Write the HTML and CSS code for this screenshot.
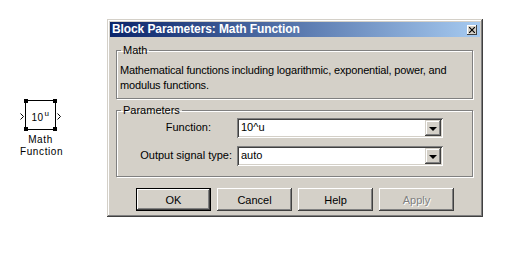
FILE: index.html
```html
<!DOCTYPE html>
<html>
<head>
    <meta charset="UTF-8">
    <title>Block Parameters: Math Function</title>
    <link rel="stylesheet" href="styles.css">
</head>
<body>

<div class="canvas">

    <div class="model">
        <div class="blk-row">
            <svg class="port" width="4" height="7" viewBox="0 0 4 7"><polyline points="0.5,0.5 3.5,3.5 0.5,6.5" fill="none" stroke="#000" stroke-width="1"/></svg>
            <div class="blk">
                <span class="blk-text">10<sup>u</sup></span>
                <i class="hd tl"></i><i class="hd tr"></i><i class="hd bl"></i><i class="hd br"></i>
            </div>
            <svg class="port" width="4" height="7" viewBox="0 0 4 7"><polyline points="0.5,0.5 3.5,3.5 0.5,6.5" fill="none" stroke="#000" stroke-width="1"/></svg>
        </div>
        <div class="blk-name">Math<br>Function</div>
    </div>

    <div class="dlg">
        <div class="title">
            <span>Block Parameters: Math Function</span>
            <span class="close"><svg width="6" height="6" viewBox="0 0 6 6"><path d="M0 0L6 6M6 0L0 6" stroke="#000" stroke-width="1.2"/></svg></span>
        </div>

        <fieldset class="group math">
            <legend>Math</legend>
            <p>Mathematical functions including logarithmic, exponential, power, and modulus functions.</p>
        </fieldset>

        <fieldset class="group params">
            <legend>Parameters</legend>
            <div class="form">
                <label class="lbl-fn">Function:</label>
                <div class="combo"><span>10^u</span><i class="drop"></i></div>
                <label>Output signal type:</label>
                <div class="combo"><span>auto</span><i class="drop"></i></div>
            </div>
        </fieldset>

        <div class="buttons">
            <button class="btn default">OK</button>
            <button class="btn">Cancel</button>
            <button class="btn">Help</button>
            <button class="btn disabled">Apply</button>
        </div>
    </div>

</div>

</body>
</html>
```

FILE: styles.css
```css
* {
    margin: 0;
    padding: 0;
    box-sizing: border-box;
}

body {
    background: #fff;
    font: 11px/1.2 "Liberation Sans", Arial, sans-serif;
    color: #000;
}

.canvas {
    display: flex;
    align-items: flex-start;
    width: 514px;
    height: 263px;
}

/* simulink block */

.model {
    width: 107px;
    padding: 100px 0 0 20px;
}

.blk-row {
    display: flex;
    align-items: center;
    gap: 1px;
    width: 41px;
}

.port {
    display: block;
    margin-top: 3px;
}

.blk {
    position: relative;
    width: 31px;
    height: 30px;
    border: 1px solid #000;
    display: flex;
    align-items: center;
    justify-content: center;
}

.blk-text {
    font-size: 10px;
    letter-spacing: 0.5px;
    padding-top: 3px;
}

.blk-text sup {
    font-size: 8px;
    margin-left: 1px;
    vertical-align: 5px;
}

.hd {
    position: absolute;
    width: 4px;
    height: 4px;
    background: #000;
}

.tl { left: -2px; top: -2px; }
.tr { right: -2px; top: -2px; }
.bl { left: -2px; bottom: -2px; }
.br { right: -2px; bottom: -2px; }

.blk-name {
    width: 41px;
    margin-top: 4px;
    text-align: center;
    font-size: 10px;
    line-height: 12px;
    letter-spacing: 0.6px;
}

/* dialog */

.dlg {
    margin-top: 19px;
    width: 376px;
    height: 198px;
    padding: 3px;
    background: #d4d0c8;
    box-shadow: inset -1px -1px #404040, inset 1px 1px #d4d0c8, inset -2px -2px #808080, inset 2px 2px #fff;
    display: flex;
    flex-direction: column;
}

.title {
    height: 15px;
    padding: 0 3px 0 2px;
    background: linear-gradient(to right, #0a246a, #a6caf0);
    color: #fff;
    font-weight: bold;
    font-size: 12px;
    letter-spacing: -0.1px;
    display: flex;
    align-items: center;
    justify-content: space-between;
}

.close {
    width: 10px;
    height: 10px;
    background: #d4d0c8;
    box-shadow: inset -1px -1px #404040, inset 1px 1px #fff;
    display: flex;
    align-items: center;
    justify-content: center;
}

.close svg {
    display: block;
}

.group {
    margin: 0 7px 0 6px;
    border: 1px solid #808080;
    box-shadow: inset 1px 1px #fff, 1px 1px #fff;
}

.group legend {
    margin-left: 1px;
    padding: 0 2px;
    line-height: 14px;
}

.math {
    margin-top: 6px;
    padding: 6px 10px 5px 3px;
}

.math p {
    line-height: 15px;
    letter-spacing: -0.16px;
}

.params {
    margin-top: 4px;
    padding: 1px 29px 10px 3px;
}

.form {
    display: grid;
    grid-template-columns: 1fr 206px;
    column-gap: 5px;
    row-gap: 8px;
    align-items: center;
}

.form label {
    text-align: right;
}

.form .lbl-fn {
    padding-right: 21px;
}

.combo {
    height: 20px;
    padding: 2px;
    background: #fff;
    box-shadow: inset 1px 1px #808080, inset -1px -1px #fff, inset 2px 2px #404040, inset -2px -2px #d4d0c8;
    display: flex;
    align-items: center;
    justify-content: space-between;
}

.combo span {
    padding-left: 2px;
}

.drop {
    width: 16px;
    height: 16px;
    background: #d4d0c8;
    box-shadow: inset -1px -1px #404040, inset 1px 1px #d4d0c8, inset -2px -2px #808080, inset 2px 2px #fff;
    display: flex;
    align-items: center;
    justify-content: center;
}

.drop:after {
    content: "";
    border-left: 4px solid transparent;
    border-right: 4px solid transparent;
    border-top: 4px solid #000;
    margin-top: 1px;
}

.buttons {
    margin-top: 11px;
    display: flex;
    justify-content: center;
    gap: 6px;
}

.btn {
    width: 75px;
    height: 23px;
    border: 0;
    background: #d4d0c8;
    font: 11px "Liberation Sans", Arial, sans-serif;
    color: #000;
    box-shadow: inset -1px -1px #404040, inset 1px 1px #fff, inset -2px -2px #808080, inset 2px 2px #d4d0c8;
}

.btn.default {
    border: 1px solid #000;
}

.btn.disabled {
    color: #808080;
    text-shadow: 1px 1px #fff;
}
```
